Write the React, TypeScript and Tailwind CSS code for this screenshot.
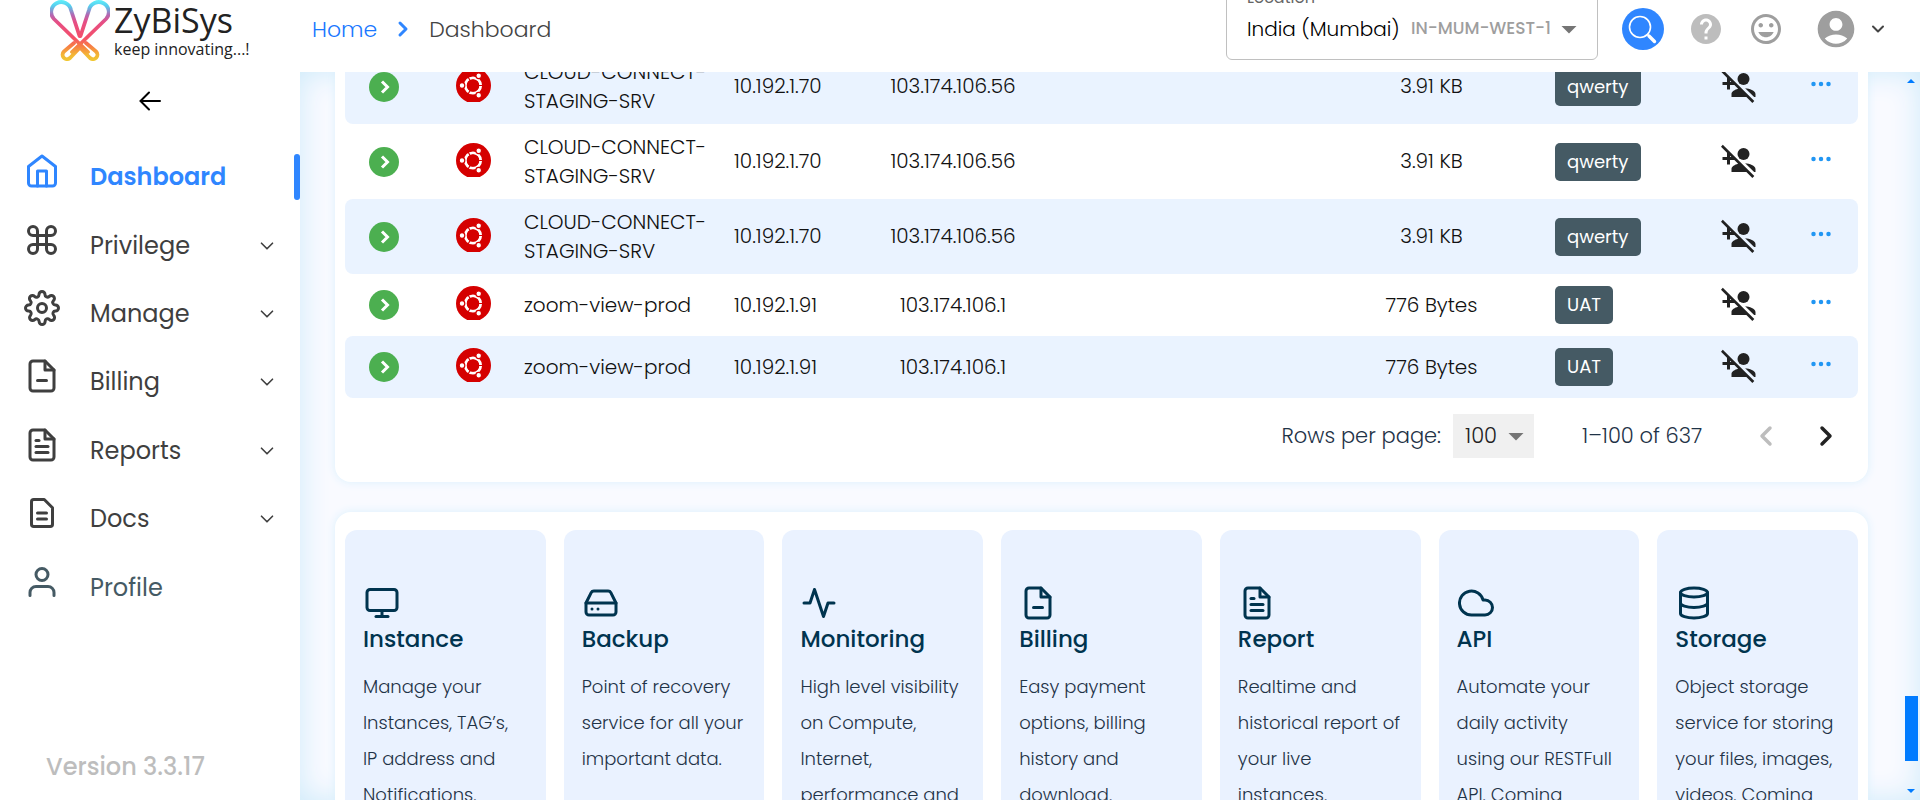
import React from "react";
import {
  FiActivity,
  FiChevronDown,
  FiChevronLeft,
  FiChevronRight,
  FiCloud,
  FiCommand,
  FiDatabase,
  FiFileMinus,
  FiFileText,
  FiHardDrive,
  FiHome,
  FiMonitor,
  FiSettings,
  FiUser,
} from "react-icons/fi";
import {
  MdAccountCircle,
  MdArrowDropDown,
  MdHelp,
  MdOutlineTagFaces,
  MdPersonAddDisabled,
} from "react-icons/md";
import { BsThreeDots } from "react-icons/bs";

type IconType = React.ComponentType<{ className?: string }>;

function DocIcon({ className }: { className?: string }) {
  return (
    <svg
      viewBox="0 0 24 24"
      className={className}
      fill="none"
      stroke="currentColor"
      strokeWidth="2"
      strokeLinecap="round"
      strokeLinejoin="round"
      aria-hidden="true"
    >
      <path d="M6.5 3H13.5L19 8.5V19.5A1.5 1.5 0 0 1 17.5 21H6.5A1.5 1.5 0 0 1 5 19.5V4.5A1.5 1.5 0 0 1 6.5 3Z" />
      <path d="M9 12H15M9 16H15" />
    </svg>
  );
}

function LogoMark() {
  return (
    <svg viewBox="0 0 60 61" className="h-[61px] w-[60px]" fill="none" aria-hidden="true">
      <defs>
        <linearGradient id="mark" gradientUnits="userSpaceOnUse" x1="0" y1="0" x2="0" y2="61">
          <stop offset="0" stopColor="#5ff0fa" />
          <stop offset="0.1" stopColor="#56cdee" />
          <stop offset="0.24" stopColor="#b069b4" />
          <stop offset="0.36" stopColor="#e64e85" />
          <stop offset="0.62" stopColor="#f4506a" />
          <stop offset="0.75" stopColor="#f77b45" />
          <stop offset="0.9" stopColor="#f3b735" />
          <stop offset="1" stopColor="#f0c832" />
        </linearGradient>
      </defs>
      <g stroke="url(#mark)" strokeWidth="3.8" strokeLinecap="round" strokeLinejoin="round">
        <path d="M29.5 36L21 10A10 10 0 1 0 4 19L38 52" />
        <path d="M30.5 36L39 10A10 10 0 1 1 56 19L22 52" />
        <path d="M24 43L14 51.5A4.4 4.4 0 0 0 20 58L30 47.5" />
        <path d="M36 43L46 51.5A4.4 4.4 0 0 1 40 58L30 47.5" />
      </g>
    </svg>
  );
}

function StatusIcon() {
  return (
    <svg viewBox="0 0 30 30" className="mx-auto size-[30px]" role="img" aria-label="Running">
      <circle cx="15" cy="15" r="15" fill="#4caf50" />
      <path d="M13 9.5L18.5 15L13 20.5" fill="none" stroke="#fff" strokeWidth="3" />
    </svg>
  );
}

function UbuntuIcon() {
  return (
    <svg viewBox="0 0 35 34" className="mx-auto mb-1 h-[34px] w-[35px]" role="img" aria-label="Ubuntu">
      <circle cx="17.5" cy="17.5" r="17.5" fill="#d50000" />
      <circle cx="17" cy="17.5" r="7.7" fill="none" stroke="#fff" strokeWidth="2.8" />
      <path d="M17 17.5H28M17 17.5L11.5 8M17 17.5L11.5 27" stroke="#d50000" strokeWidth="1.2" />
      <circle cx="17" cy="17.5" r="6" fill="#d50000" />
      <g fill="#fff" stroke="#d50000" strokeWidth="1.2">
        <circle cx="6" cy="17.5" r="2.8" />
        <circle cx="22.7" cy="7.8" r="2.8" />
        <circle cx="22.7" cy="27.2" r="2.8" />
      </g>
    </svg>
  );
}

const navItems: { label: string; icon: IconType; tone: string; expandable: boolean; active?: boolean }[] = [
  { label: "Dashboard", icon: FiHome, tone: "text-[#2f86ff] font-semibold", expandable: false, active: true },
  { label: "Privilege", icon: FiCommand, tone: "text-[#3f3f3f]", expandable: true },
  { label: "Manage", icon: FiSettings, tone: "text-[#3f3f3f]", expandable: true },
  { label: "Billing", icon: FiFileMinus, tone: "text-[#3f3f3f]", expandable: true },
  { label: "Reports", icon: FiFileText, tone: "text-[#3f3f3f]", expandable: true },
  { label: "Docs", icon: DocIcon, tone: "text-[#3f3f3f]", expandable: true },
  { label: "Profile", icon: FiUser, tone: "text-[#455a64]", expandable: false },
];

const servers = [
  { name: "CLOUD-CONNECT-STAGING-SRV", ip: "10.192.1.70", publicIp: "103.174.106.56", usage: "3.91 KB", tag: "qwerty" },
  { name: "CLOUD-CONNECT-STAGING-SRV", ip: "10.192.1.70", publicIp: "103.174.106.56", usage: "3.91 KB", tag: "qwerty" },
  { name: "CLOUD-CONNECT-STAGING-SRV", ip: "10.192.1.70", publicIp: "103.174.106.56", usage: "3.91 KB", tag: "qwerty" },
  { name: "zoom-view-prod", ip: "10.192.1.91", publicIp: "103.174.106.1", usage: "776 Bytes", tag: "UAT" },
  { name: "zoom-view-prod", ip: "10.192.1.91", publicIp: "103.174.106.1", usage: "776 Bytes", tag: "UAT" },
];

const services: { title: string; icon: IconType; lines: string[] }[] = [
  { title: "Instance", icon: FiMonitor, lines: ["Manage your", "Instances, TAG’s,", "IP address and", "Notifications."] },
  { title: "Backup", icon: FiHardDrive, lines: ["Point of recovery", "service for all your", "important data."] },
  { title: "Monitoring", icon: FiActivity, lines: ["High level visibility", "on Compute,", "Internet,", "performance and"] },
  { title: "Billing", icon: FiFileMinus, lines: ["Easy payment", "options, billing", "history and", "download."] },
  { title: "Report", icon: FiFileText, lines: ["Realtime and", "historical report of", "your live", "instances."] },
  { title: "API", icon: FiCloud, lines: ["Automate your", "daily activity", "using our RESTFull", "API. Coming"] },
  { title: "Storage", icon: FiDatabase, lines: ["Object storage", "service for storing", "your files, images,", "videos. Coming"] },
];

function Header() {
  return (
    <header className="flex h-[72px] shrink-0 items-start bg-white">
      <a href="#home" className="flex w-[300px] shrink-0 items-start gap-1 pl-[50px] text-[#222]">
        <LogoMark />
        <span className="flex flex-col font-['Open_Sans',sans-serif]">
          <span className="text-[34px] leading-[40px]">ZyBiSys</span>
          <span className="text-base leading-[18px]">keep innovating...!</span>
        </span>
      </a>
      <nav aria-label="Breadcrumb" className="flex h-[58px] items-center gap-3.5 pl-3 text-[22px] font-light">
        <a href="#home" className="text-[#1a78ff]">Home</a>
        <FiChevronRight className="size-6 text-[#2f86ff]" strokeWidth={3} />
        <span className="text-[#444]">Dashboard</span>
      </nav>
      <div className="ml-auto flex items-start pr-8">
        <div className="relative -mt-3 flex h-[72px] w-[372px] items-center rounded-md border border-[#c0c0c0] pr-2.5 pl-5">
          <label htmlFor="location" className="absolute -top-px left-5 text-base leading-5 text-[#666]">
            Location
          </label>
          <select id="location" className="w-[164px] appearance-none bg-transparent pt-2.5 text-xl font-light text-black outline-none">
            <option>India (Mumbai)</option>
          </select>
          <span className="pt-2.5 text-[17px] font-medium whitespace-nowrap text-[#9e9e9e]">IN-MUM-WEST-1</span>
          <MdArrowDropDown className="mt-2.5 ml-auto size-9 text-[#757575]" />
        </div>
        <div className="flex h-[58px] items-center pl-6">
          <button type="button" aria-label="Search" className="size-[42px] rounded-full bg-[#2f86ff]">
            <svg viewBox="0 0 42 42" fill="none" stroke="#fff" aria-hidden="true">
              <circle cx="18" cy="19" r="10.5" strokeWidth="1.6" />
              <path d="M25.5 26.5L27 28" strokeWidth="1.6" />
              <path d="M27 28L32.5 33.5" strokeWidth="3.4" strokeLinecap="round" />
            </svg>
          </button>
          <button type="button" aria-label="Help" className="ml-6 text-[#bdbdbd]">
            <MdHelp className="size-9" />
          </button>
          <button type="button" aria-label="Feedback" className="ml-6 text-[#9e9e9e]">
            <MdOutlineTagFaces className="size-9" />
          </button>
          <button type="button" aria-label="Account" className="ml-[30px] flex items-center gap-2.5 text-[#9e9e9e]">
            <MdAccountCircle className="size-11" />
            <FiChevronDown className="size-5 text-[#444]" strokeWidth={2.4} />
          </button>
        </div>
      </div>
    </header>
  );
}

function Sidebar() {
  return (
    <aside className="flex w-[300px] shrink-0 flex-col bg-white">
      <button type="button" aria-label="Collapse menu" className="mx-auto mt-[19px] text-black">
        <svg viewBox="0 0 22 20" className="h-5 w-[22px]" fill="none" stroke="currentColor" strokeWidth="2" strokeLinecap="round" aria-hidden="true">
          <path d="M21 10H1.5M10 1.5L1.5 10L10 18.5" />
        </svg>
      </button>
      <nav aria-label="Main" className="mt-8 grid h-[479px] shrink-0 grid-rows-7">
        {navItems.map((item) => (
          <a
            key={item.label}
            href={"#" + item.label.toLowerCase()}
            className={"relative flex items-center pl-6 text-2xl " + item.tone}
          >
            <item.icon className="mb-3 size-9" />
            <span className="ml-[30px]">{item.label}</span>
            {item.expandable && <FiChevronDown className="mr-[22px] ml-auto size-[22px]" strokeWidth={1.8} />}
            {item.active && <span className="absolute right-0 h-[46px] w-1.5 rounded-sm bg-[#2f86ff]" />}
          </a>
        ))}
      </nav>
      <p className="mt-auto mb-[17px] pl-[46px] text-2xl font-medium text-[#bdbdbd]">Version 3.3.17</p>
    </aside>
  );
}

function ServerTable() {
  return (
    <section className="rounded-2xl bg-white px-2.5 shadow-[0_0_10px_#daf0fc]">
      <table className="w-full table-fixed border-separate border-spacing-0 text-xl leading-[29px] font-light text-[#111]">
        <colgroup>
          <col className="w-[78px]" />
          <col className="w-[101px]" />
          <col className="w-[210px]" />
          <col className="w-[121px]" />
          <col className="w-[196px]" />
          <col />
          <col className="w-[243px]" />
          <col className="w-[122px]" />
          <col className="w-[128px]" />
          <col className="w-[55px]" />
        </colgroup>
        <tbody>
          {servers.map((s, i) => (
            <tr
              key={i}
              className={(s.name.length > 20 ? "h-[75px]" : "h-[62px]") + (i % 2 === 0 ? " bg-[#eaf3ff]" : "")}
            >
              <td className="rounded-l-lg"><StatusIcon /></td>
              <td><UbuntuIcon /></td>
              <td className="pr-5">{s.name}</td>
              <td className="whitespace-nowrap">{s.ip}</td>
              <td className="text-center">{s.publicIp}</td>
              <td />
              <td className="text-center">{s.usage}</td>
              <td className="pl-0.5">
                <span className="inline-block rounded-[5px] bg-[#455a64] px-3 py-1 align-middle text-lg leading-[30px] font-normal text-white">
                  {s.tag}
                </span>
              </td>
              <td>
                <MdPersonAddDisabled className="mx-auto mb-1 size-9 text-[#222]" />
              </td>
              <td className="rounded-r-lg pl-1.5">
                <button type="button" aria-label="More actions" className="mb-1.5 block text-[#2196f3]">
                  <BsThreeDots className="size-6" />
                </button>
              </td>
            </tr>
          ))}
        </tbody>
      </table>
      <div className="flex h-[84px] items-start justify-end pt-4 text-[21px] font-light text-[#1f3347]">
        <div className="flex h-11 items-center">
          <label htmlFor="rows-per-page" className="pr-3">Rows per page:</label>
          <span className="relative flex h-11 w-[81px] items-center bg-[#f0f0f0]">
            <select id="rows-per-page" className="h-11 w-full appearance-none bg-transparent pl-3 text-[#222] outline-none">
              <option>100</option>
            </select>
            <MdArrowDropDown className="pointer-events-none absolute right-0 size-9 text-[#757575]" />
          </span>
          <span className="w-[172px] pl-12 whitespace-nowrap">1–100 of 637</span>
          <button type="button" aria-label="Previous page" disabled className="ml-11 text-[#bdbdbd]">
            <FiChevronLeft className="size-8" strokeWidth={2.6} />
          </button>
          <button type="button" aria-label="Next page" className="mr-4 ml-7 text-[#222]">
            <FiChevronRight className="size-8" strokeWidth={2.6} />
          </button>
        </div>
      </div>
    </section>
  );
}

function Services() {
  return (
    <section className="grid grid-cols-7 gap-[18px] rounded-2xl bg-white px-2.5 py-[18px] shadow-[0_0_10px_#daf0fc]">
      {services.map((s) => (
        <article key={s.title} className="rounded-xl bg-[#eaf2ff] px-[18px] pt-[55px] pb-8">
          <s.icon className="ml-px size-9 text-[#00344f]" />
          <h2 className="text-[23px] leading-9 font-medium text-[#00344f]">{s.title}</h2>
          <p className="mt-3 text-lg leading-9 font-light text-[#1f3347]">
            {s.lines.map((line) => (
              <span key={line} className="block whitespace-nowrap">{line}</span>
            ))}
          </p>
        </article>
      ))}
    </section>
  );
}

export default function App() {
  return (
    <div className="flex h-screen flex-col overflow-hidden bg-white font-['Poppins','Inter',sans-serif]">
      <Header />
      <div className="flex min-h-0 flex-1">
        <Sidebar />
        <main className="flex min-w-0 flex-1 overflow-hidden bg-[#f9faff] shadow-[inset_0_0_30px_#cdeafa]">
          <div className="-mt-[23px] flex min-w-0 flex-1 flex-col gap-[30px] pr-9 pl-[35px]">
            <ServerTable />
            <Services />
          </div>
          <div className="flex w-4 flex-col items-center py-[7px] pr-0.5" aria-hidden="true">
            <span className="border-x-4 border-b-4 border-x-transparent border-b-[#007bff]" />
            <span className="mt-auto mb-7 h-[65px] w-[13px] bg-[#007bff]" />
            <span className="border-x-4 border-t-4 border-x-transparent border-t-[#007bff]" />
          </div>
        </main>
      </div>
    </div>
  );
}
